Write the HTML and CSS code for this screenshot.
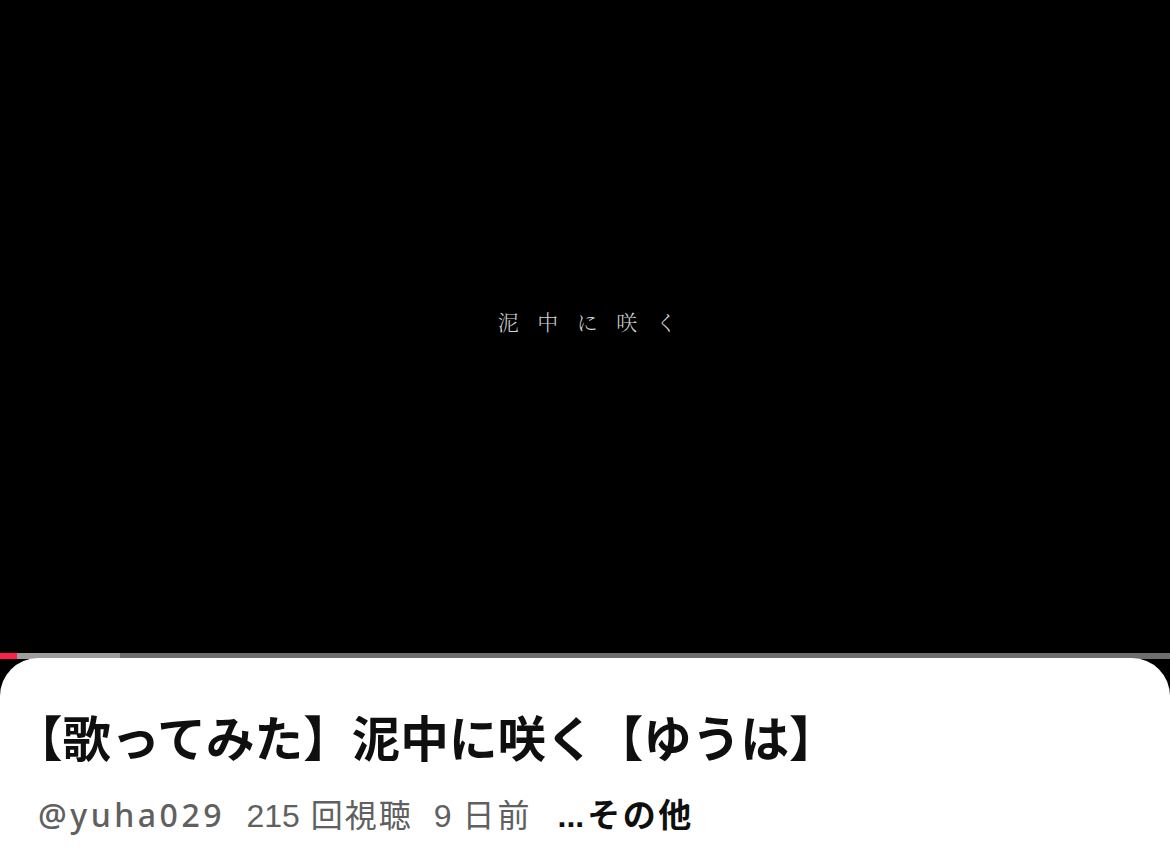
FILE: index.html
```html
<!DOCTYPE html>
<html lang="ja">
<head>
<meta charset="utf-8">
<title>【歌ってみた】泥中に咲く【ゆうは】</title>
<link rel="stylesheet" href="styles.css">
</head>
<body>
<div class="page">
  <div class="video">
    <div class="caption">泥中に咲く</div>
  </div>
  <div class="progress">
    <div class="played"></div>
    <div class="buffered"></div>
  </div>
  <div class="sheet">
    <h1 class="title">【歌ってみた】泥中に咲く【ゆうは】</h1>
    <div class="meta">
      <span class="channel">@yuha029</span>
      <span class="views"><span class="num">215</span> <span class="jp">回視聴</span></span>
      <span class="date"><span class="num">9</span> <span class="jp">日前</span></span>
      <span class="more"><span class="dots">...</span><span class="jp">その他</span></span>
    </div>
  </div>
</div>
</body>
</html>
```
FILE: styles.css
```css
html, body {
  margin: 0;
  padding: 0;
  background: #000;
}
.page {
  width: 1170px;
  height: 853px;
  display: flex;
  flex-direction: column;
  background: #000;
  overflow: hidden;
}
.video {
  height: 653px;
  display: flex;
  align-items: center;
  justify-content: center;
  background: #000;
}
.caption {
  font-family: "Noto Serif CJK JP", "Noto Sans CJK JP", serif;
  font-weight: 300;
  font-size: 21px;
  letter-spacing: 18.5px;
  color: #d0d0d0;
  margin-left: 23px;
  margin-bottom: 12px;
}
.progress {
  height: 6px;
  display: flex;
  background: #6e6e6e;
}
.played {
  width: 17px;
  background: #ff1f48;
}
.buffered {
  width: 103px;
  background: #9e9e9e;
}
.sheet {
  flex: 1;
  background: #fff;
  border-radius: 38px 38px 0 0;
  margin-top: -1px;
  padding: 50px 0 0 0;
  font-family: "Noto Sans CJK JP", sans-serif;
}
.title {
  margin: 0;
  padding-left: 14px;
  font-size: 48.6px;
  line-height: 56px;
  font-weight: 700;
  color: #0f0f0f;
  white-space: nowrap;
}
.meta {
  margin-top: 30px;
  padding-left: 38px;
  display: flex;
  align-items: baseline;
  gap: 25px;
  font-size: 32px;
  line-height: 38px;
  color: #606060;
  white-space: nowrap;
  font-family: "Liberation Sans", "Noto Sans CJK JP", sans-serif;
}
.channel {
  font-family: "Noto Sans", "Liberation Sans", sans-serif;
  font-weight: 500;
  letter-spacing: 3.5px;
  margin-right: -3.5px;
}
.jp {
  font-family: "Noto Sans CJK JP", sans-serif;
  font-weight: 400;
  letter-spacing: 2px;
}
.date .jp {
  letter-spacing: 3px;
}
.views, .date {
  word-spacing: 2px;
}
.date {
  margin-left: -4px;
}
.more {
  color: #0f0f0f;
  font-weight: 700;
}
.more .jp {
  font-weight: 700;
  font-size: 33px;
  letter-spacing: 2.5px;
}
.dots {
  font-family: "Liberation Sans", sans-serif;
  font-weight: 700;
  margin-right: 3px;
}
```
